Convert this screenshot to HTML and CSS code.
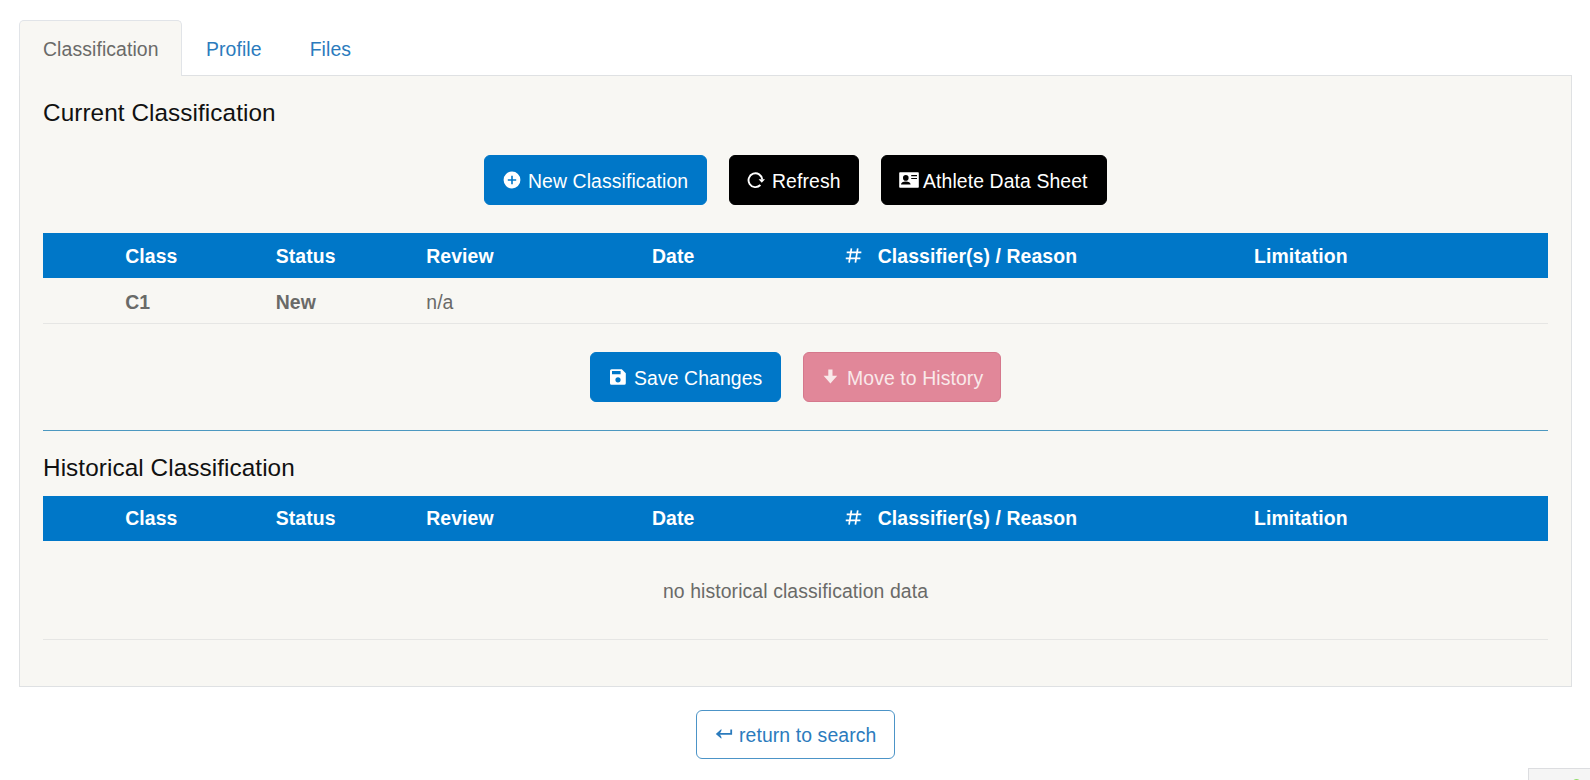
FILE: index.html
```html
<!DOCTYPE html>
<html lang="en">
<head>
<meta charset="utf-8">
<title>Classification</title>
<link rel="stylesheet" href="styles.css">
</head>
<body>
<nav class="tabs">
  <a class="tab active">Classification</a>
  <a class="tab">Profile</a>
  <a class="tab">Files</a>
</nav>
<main class="panel">
  <h2 class="title">Current Classification</h2>
  <div class="actions top">
    <button class="btn blue w-new"><svg class="icon" viewBox="0 0 18 18"><path fill="currentColor" fill-rule="evenodd" d="M9 .6a8.4 8.4 0 1 0 0 16.8A8.4 8.4 0 0 0 9 .6zM8.2 4.800h1.600v3.400h3.400v1.600H9.800v3.400H8.200V9.800H4.800V8.200h3.400z"/></svg><span>New Classification</span></button>
    <button class="btn black w-refresh"><svg class="icon" viewBox="0 0 18 18"><path fill="none" stroke="currentColor" stroke-width="1.9" d="M13.400 14A6.900 6.900 0 1 1 15.300 8.500"/><path fill="currentColor" d="M11.600 8.200h6.400l-3.200 3.600z"/></svg><span>Refresh</span></button>
    <button class="btn black w-sheet"><svg class="icon card" viewBox="0 0 20 16"><path fill="currentColor" fill-rule="evenodd" d="M1 .3h18a.8.8 0 0 1 .8.8v13.8a.8.8 0 0 1-.8.8H1a.8.8 0 0 1-.8-.8V1.100A.8.8 0 0 1 1 .3zM6.800 3.100a2.800 2.800 0 1 0 0 5.600 2.800 2.800 0 0 0 0-5.600zM2 12.600h9.600c0-2-2-3.200-4.800-3.200S2 10.600 2 12.600zM12.200 3.100v1.200h5.800V3.100zM12.200 5.900v1.100h5.800V5.900z"/></svg><span>Athlete Data Sheet</span></button>
  </div>
  <div class="row head">
    <span></span><span>Class</span><span>Status</span><span>Review</span><span>Date</span>
    <span class="num"><svg class="hash" viewBox="0 0 18 18"><path fill="none" stroke="currentColor" stroke-width="1.8" d="M6.800 1.500 4.300 16.500M13.500 1.500l-2.500 15M1.800 5.700h15.500M.8 12.100h15.500"/></svg></span>
    <span>Classifier(s) / Reason</span><span>Limitation</span>
  </div>
  <div class="row entry">
    <span></span><b>C1</b><b>New</b><span>n/a</span>
  </div>
  <div class="actions bottom">
    <button class="btn blue w-save"><svg class="icon" viewBox="0 0 18 18"><path fill="currentColor" fill-rule="evenodd" d="M2.600 1.200h10.200l4 4v10a1.600 1.600 0 0 1-1.600 1.600H2.600A1.600 1.600 0 0 1 1 15.200V2.800a1.600 1.600 0 0 1 1.600-1.600zM3 3v3.300h8.600V3zM9 9.200a2.600 2.600 0 1 0 0 5.200 2.600 2.600 0 0 0 0-5.200z"/></svg><span>Save Changes</span></button>
    <button class="btn pink w-move" disabled><svg class="icon" viewBox="0 0 18 18"><path fill="currentColor" d="M6.300 1.600h4.200v6.200h4.700L8.400 15.400 1.600 7.800h4.700z"/></svg><span>Move to History</span></button>
  </div>
  <hr class="divider">
  <h2 class="title second">Historical Classification</h2>
  <div class="row head history">
    <span></span><span>Class</span><span>Status</span><span>Review</span><span>Date</span>
    <span class="num"><svg class="hash" viewBox="0 0 18 18"><path fill="none" stroke="currentColor" stroke-width="1.8" d="M6.800 1.500 4.300 16.500M13.500 1.500l-2.500 15M1.800 5.700h15.500M.8 12.100h15.500"/></svg></span>
    <span>Classifier(s) / Reason</span><span>Limitation</span>
  </div>
  <div class="empty">no historical classification data</div>
</main>
<footer class="foot">
  <button class="btn outline"><svg class="icon" viewBox="0 0 18 18"><path fill="none" stroke="currentColor" stroke-width="1.8" d="M16.200 4.500v4.400H3"/><path fill="currentColor" d="M.8 8.900 6.400 4v1.800L4.600 8.900l1.800 3.100v1.800z"/></svg><span>return to search</span></button>
</footer>
<div class="dock"><i class="dot"></i></div>
</body>
</html>
```
FILE: styles.css
```css
* { box-sizing: border-box; }
html, body { height: 100%; }
body {
  margin: 0;
  padding: 20px 18px 0 19px;
  overflow: hidden;
  background: #fff;
  color: #6a6a68;
  font: 19.4px/28px "Liberation Sans", Arial, sans-serif;
  letter-spacing: .1px;
}
.tabs { display: flex; height: 55px; }
.tab {
  padding: 15px 24px 0;
  height: 55px;
  color: #2b7bbd;
}
.tab.active {
  width: 163px;
  height: 56px;
  padding: 14px 0 0 23px;
  position: relative;
  color: #6a6a68;
  background: #f8f7f3;
  border: 1px solid #e1e4e8;
  border-bottom: 0;
  border-radius: 5px 5px 0 0;
}
.panel {
  height: 612px;
  padding: 20px 23px 0 23px;
  background: #f8f7f3;
  border: 1px solid #dfe1e3;
}
.title {
  margin: 0;
  height: 34px;
  font-size: 24.3px;
  font-weight: 400;
  line-height: 33px;
  letter-spacing: .08px;
  color: #111;
}
.actions { display: flex; justify-content: center; gap: 22px; }
.top { margin: 25px 0 28px; }
.bottom { margin: 28px 0; }
.btn {
  display: flex;
  align-items: center;
  height: 50px;
  padding: 1px 0 0 18px;
  gap: 7px;
  border: 1px solid;
  border-radius: 6px;
  font: inherit;
  letter-spacing: inherit;
  white-space: nowrap;
}
.icon { flex: none; width: 18px; height: 18px; margin-top: -1px; }
.blue { background: #0077c8; border-color: #0077c8; color: #fff; }
.black { background: #000; border-color: #000; color: #fff; }
.pink { background: #e18799; border-color: #d5788c; color: #f9e9ea; }
.outline { width: 199px; height: 49px; padding-top: 0; gap: 6px; background: #fff; border-color: #4c94c7; color: #2b7bbd; }
.w-new { width: 223px; }
.w-refresh { width: 130px; padding-left: 17px; }
.w-sheet { width: 226px; padding-left: 17px; gap: 4px; }
.w-save { width: 191px; }
.w-move { width: 198px; }
.icon.card { width: 20px; height: 16px; }
.row {
  display: grid;
  grid-template-columns: 5% 10% 10% 15% 12.7% 2.3% 25% 20%;
  align-items: center;
}
.row > * { padding-left: 7px; }
.head { height: 45px; background: #0077c8; color: #fff; font-weight: 700; }
.history { padding-bottom: 2px; }
.row > .num { padding-left: 9px; }
.hash { display: block; width: 17px; height: 17px; margin-top: -1px; }
.entry { height: 46px; padding-top: 2px; border-bottom: 1px solid #e6e6e4; }
.divider { margin: 0; border: 0; border-top: 1px solid #4c98c0; }
.second { margin-top: 20px; height: 45px; }
.empty { height: 99px; line-height: 100px; text-align: center; border-bottom: 1px solid #e6e6e4; }
.foot { display: flex; justify-content: center; padding-top: 23px; }
.dock {
  position: absolute;
  right: 0;
  bottom: 0;
  width: 62px;
  height: 12px;
  background: #f5f5f5;
  border: 1px solid #dcdde0;
  border-width: 1px 0 0 1px;
  overflow: hidden;
}
.dot { position: absolute; left: 43px; top: 10px; width: 9px; height: 9px; border-radius: 50%; background: #8fdc6a; }
```
